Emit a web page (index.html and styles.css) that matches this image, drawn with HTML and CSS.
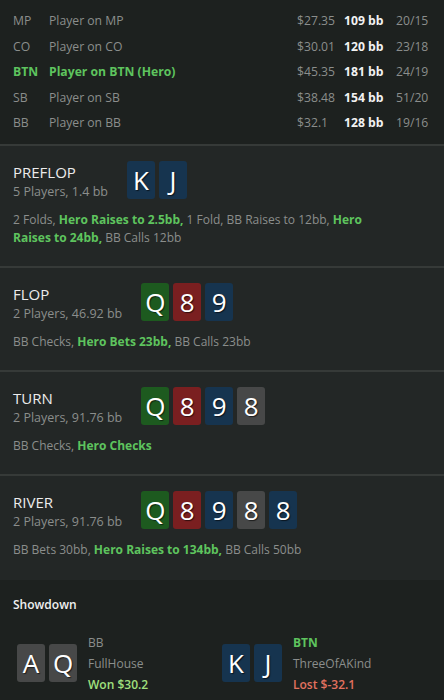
FILE: index.html
```html
<!DOCTYPE html>
<html>
<head>
<meta charset="utf-8">
<link rel="stylesheet" href="styles.css">
</head>
<body>
<div class="players">
  <div class="prow"><span class="pos">MP</span><span class="name">Player on MP</span><span class="money">$27.35</span><span class="bb">109 bb</span><span class="stat">20/15</span></div>
  <div class="prow"><span class="pos">CO</span><span class="name">Player on CO</span><span class="money">$30.01</span><span class="bb">120 bb</span><span class="stat">23/18</span></div>
  <div class="prow hero"><span class="pos">BTN</span><span class="name">Player on BTN (Hero)</span><span class="money">$45.35</span><span class="bb">181 bb</span><span class="stat">24/19</span></div>
  <div class="prow"><span class="pos">SB</span><span class="name">Player on SB</span><span class="money">$38.48</span><span class="bb">154 bb</span><span class="stat">51/20</span></div>
  <div class="prow"><span class="pos">BB</span><span class="name">Player on BB</span><span class="money">$32.1</span><span class="bb">128 bb</span><span class="stat">19/16</span></div>
</div>

<div class="street">
  <div class="street-head">
    <div class="street-info"><div class="street-title">PREFLOP</div><div class="street-sub">5 Players, 1.4 bb</div></div>
    <div class="cards"><span class="card blue">K</span><span class="card blue">J</span></div>
  </div>
  <div class="actions">2 Folds, <b>Hero Raises to 2.5bb,</b> 1 Fold, BB Raises to 12bb, <b>Hero</b><br><b>Raises to 24bb,</b> BB Calls 12bb</div>
</div>

<div class="street">
  <div class="street-head">
    <div class="street-info"><div class="street-title">FLOP</div><div class="street-sub">2 Players, 46.92 bb</div></div>
    <div class="cards"><span class="card green">Q</span><span class="card red">8</span><span class="card blue">9</span></div>
  </div>
  <div class="actions">BB Checks, <b>Hero Bets 23bb,</b> BB Calls 23bb</div>
</div>

<div class="street">
  <div class="street-head">
    <div class="street-info"><div class="street-title">TURN</div><div class="street-sub">2 Players, 91.76 bb</div></div>
    <div class="cards"><span class="card green">Q</span><span class="card red">8</span><span class="card blue">9</span><span class="card gray">8</span></div>
  </div>
  <div class="actions">BB Checks, <b>Hero Checks</b></div>
</div>

<div class="street last">
  <div class="street-head">
    <div class="street-info"><div class="street-title">RIVER</div><div class="street-sub">2 Players, 91.76 bb</div></div>
    <div class="cards"><span class="card green">Q</span><span class="card red">8</span><span class="card blue">9</span><span class="card gray">8</span><span class="card blue">8</span></div>
  </div>
  <div class="actions">BB Bets 30bb, <b>Hero Raises to 134bb,</b> BB Calls 50bb</div>
</div>

<div class="showdown">
  <div class="sd-title">Showdown</div>
  <div class="sd-row">
    <div class="sd-player">
      <div class="cards"><span class="card gray">A</span><span class="card gray">Q</span></div>
      <div class="sd-info"><div class="sd-pos">BB</div><div class="sd-hand">FullHouse</div><div class="sd-won">Won $30.2</div></div>
    </div>
    <div class="sd-player">
      <div class="cards"><span class="card blue">K</span><span class="card blue">J</span></div>
      <div class="sd-info"><div class="sd-pos hero-pos">BTN</div><div class="sd-hand">ThreeOfAKind</div><div class="sd-lost">Lost $-32.1</div></div>
    </div>
  </div>
</div>
</body>
</html>
```
FILE: styles.css
```css
html, body {
  margin: 0;
  padding: 0;
  background: #1d211f;
}
body {
  font-family: "Open Sans", "Noto Sans", sans-serif;
  font-size: 12px;
  color: #8b8e8c;
  width: 444px;
  height: 700px;
  overflow: hidden;
}
.players {
  padding: 8px 0 8px 0;
  background: #1d211f;
}
.prow {
  display: grid;
  grid-template-columns: 36px 248px 47px 52px 30px;
  padding: 0 18px 0 13px;
  height: 25.5px;
  align-items: center;
  white-space: nowrap;
  font-size: 12.2px;
}
.prow .bb {
  color: #f2f2f2;
  font-weight: 700;
}
.prow.hero .pos, .prow.hero .name {
  color: #5ec45e;
  font-weight: 700;
}
.street {
  background: #232726;
  border-top: 2px solid #363a38;
  padding: 15px 13px 19px 13px;
}
.street.last {
  padding-bottom: 21px;
}
.street-head {
  display: flex;
  align-items: flex-start;
}
.street-info {
  margin-right: 19px;
}
.street-title {
  font-size: 15px;
  line-height: 22px;
  color: #ececec;
}
.street-sub {
  font-size: 12.5px;
  line-height: 18px;
}
.cards {
  display: flex;
  gap: 4px;
}
.card {
  width: 28px;
  height: 38px;
  border-radius: 3px;
  color: #fff;
  font-size: 26px;
  line-height: 38px;
  text-align: center;
  text-shadow: 1px 1px 1px rgba(0,0,0,0.6);
}
.card.blue { background: #16344f; }
.card.green { background: #1d5a1f; }
.card.red { background: #7a1f20; }
.card.gray { background: #474848; }
.actions {
  margin-top: 10px;
  line-height: 18px;
  font-size: 12px;
}
.actions b {
  color: #5ec45e;
  font-weight: 700;
}
.showdown {
  background: #1d211f;
  padding: 17px 0 0 0;
  height: 103px;
}
.sd-title {
  padding-left: 13px;
  color: #f0f0f0;
  font-weight: 600;
  font-size: 12px;
  line-height: 16px;
}
.sd-row {
  display: flex;
  margin-top: 19px;
  padding-left: 17px;
}
.sd-player {
  width: 205px;
  display: flex;
  align-items: center;
}
.sd-info {
  margin-left: 11px;
  line-height: 21px;
  font-size: 12px;
}
.hero-pos { color: #5ec45e; font-weight: 700; }
.sd-won { color: #a0e07e; font-weight: 600; }
.sd-lost { color: #e2715f; font-weight: 600; }
```
